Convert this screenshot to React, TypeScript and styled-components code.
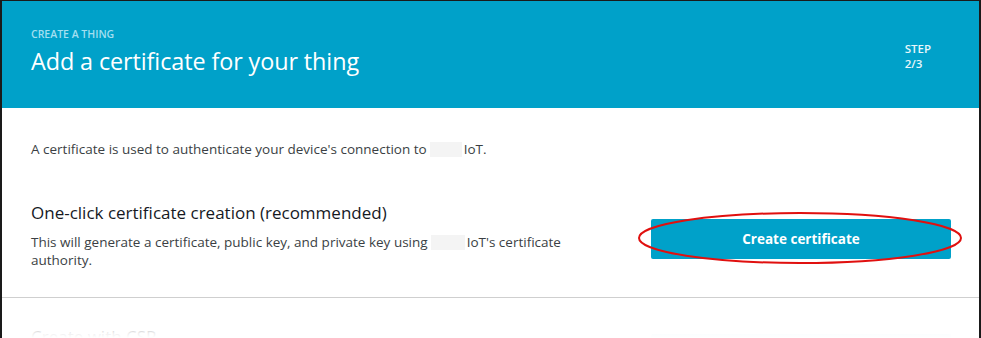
import React from "react";
import styled, { createGlobalStyle } from "styled-components";

const Global = createGlobalStyle`
  html, body { margin: 0; padding: 0; background: #ffffff; }
  body { font-family: "Open Sans", "Noto Sans", Arial, sans-serif; }
`;

const Frame = styled.div`
  position: relative;
  width: 981px;
  height: 338px;
  box-sizing: border-box;
  border-top: 1px solid #1a1a1a;
  border-left: 2px solid #1a1a1a;
  border-right: 2px solid #1a1a1a;
  overflow: hidden;
  background: #ffffff;
`;

const Header = styled.header`
  height: 107px;
  box-sizing: border-box;
  background: #00a1c9;
  padding: 26px 29px 0 29px;
  display: flex;
  justify-content: space-between;
  align-items: flex-start;
`;

const TitleBlock = styled.div`
  display: flex;
  flex-direction: column;
`;

const Eyebrow = styled.div`
  font-size: 10.5px;
  font-weight: 600;
  color: #a3dff0;
  line-height: 14px;
`;

const Title = styled.h1`
  margin: 5px 0 0 0;
  font-size: 23.4px;
  font-weight: 400;
  color: #ffffff;
  line-height: 30px;
  letter-spacing: -0.1px;
`;

const Step = styled.div`
  margin-top: 14px;
  margin-right: 19px;
  font-size: 11.5px;
  font-weight: 600;
  line-height: 15px;
  color: #e9f7fb;
`;

const Body = styled.main`
  padding: 32px 28px 0 29px;
`;

const Intro = styled.p`
  margin: 0;
  font-size: 13.5px;
  line-height: 18px;
  color: #3b3f44;
`;

const Redacted = styled.span<{ $w: number }>`
  display: inline-block;
  width: ${(p) => p.$w}px;
  height: 15px;
  vertical-align: -3px;
  background: #f4f4f4;
  margin: 0 2px 0 3px;
`;

const Section = styled.section<{ $faded?: boolean }>`
  display: flex;
  justify-content: space-between;
  align-items: flex-start;
  opacity: ${(p) => (p.$faded ? 0.35 : 1)};
`;

const SectionText = styled.div`
  display: flex;
  flex-direction: column;
  width: 555px;
`;

const SectionTitle = styled.h2`
  margin: 0 0 9px 0;
  font-size: 17px;
  font-weight: 400;
  line-height: 22px;
  color: #16191f;
`;

const SectionDesc = styled.p`
  margin: 0;
  font-size: 13.5px;
  line-height: 18px;
  color: #3b3f44;
`;

const ButtonWrap = styled.div<{ $offset: number }>`
  position: relative;
  width: 300px;
  height: 40px;
  margin-top: ${(p) => p.$offset}px;
`;

const Button = styled.button<{ $light?: boolean }>`
  width: 300px;
  height: 40px;
  border: none;
  border-radius: 2px;
  background: ${(p) => (p.$light ? "#b7e8f4" : "#00a1c9")};
  color: #ffffff;
  font-family: "Open Sans", "Noto Sans", Arial, sans-serif;
  font-size: 13.5px;
  font-weight: 700;
  cursor: pointer;
`;

const Ellipse = styled.svg`
  position: absolute;
  left: -13px;
  top: -7px;
  overflow: visible;
  pointer-events: none;
`;

const Divider = styled.hr`
  border: none;
  border-top: 1px solid #cfcfcf;
  margin: 0 -28px 0 -29px;
`;

const FirstSection = styled.div`
  margin-top: 44px;
  padding-bottom: 28px;
`;

const SecondSection = styled.div`
  margin-top: 28px;
`;

const Fade = styled.div`
  position: absolute;
  left: 0;
  right: 0;
  bottom: 0;
  height: 12px;
  background: linear-gradient(to bottom, rgba(255,255,255,0) 0%, rgba(255,255,255,0.8) 60%, #ffffff 100%);
  pointer-events: none;
`;

export default function App() {
  return (
    <>
      <Global />
      <Frame>
        <Header>
          <TitleBlock>
            <Eyebrow>CREATE A THING</Eyebrow>
            <Title>Add a certificate for your thing</Title>
          </TitleBlock>
          <Step>
            STEP
            <br />
            2/3
          </Step>
        </Header>
        <Body>
          <Intro>
            A certificate is used to authenticate your device's connection to
            <Redacted $w={32} />
            IoT.
          </Intro>
          <FirstSection>
            <Section>
              <SectionText>
                <SectionTitle>One-click certificate creation (recommended)</SectionTitle>
                <SectionDesc>
                  This will generate a certificate, public key, and private key using
                  <Redacted $w={34} />
                  IoT's certificate authority.
                </SectionDesc>
              </SectionText>
              <ButtonWrap $offset={17}>
                <Button>Create certificate</Button>
                <Ellipse width="324" height="52" viewBox="0 0 324 52">
                  <ellipse
                    cx="162"
                    cy="26"
                    rx="161"
                    ry="25"
                    fill="none"
                    stroke="#e0100f"
                    strokeWidth="2"
                  />
                </Ellipse>
              </ButtonWrap>
            </Section>
          </FirstSection>
          <Divider />
          <SecondSection>
            <Section $faded>
              <SectionText>
                <SectionTitle>Create with CSR</SectionTitle>
              </SectionText>
              <ButtonWrap $offset={8}>
                <Button $light>Create with CSR</Button>
              </ButtonWrap>
            </Section>
          </SecondSection>
        </Body>
        <Fade />
      </Frame>
    </>
  );
}
